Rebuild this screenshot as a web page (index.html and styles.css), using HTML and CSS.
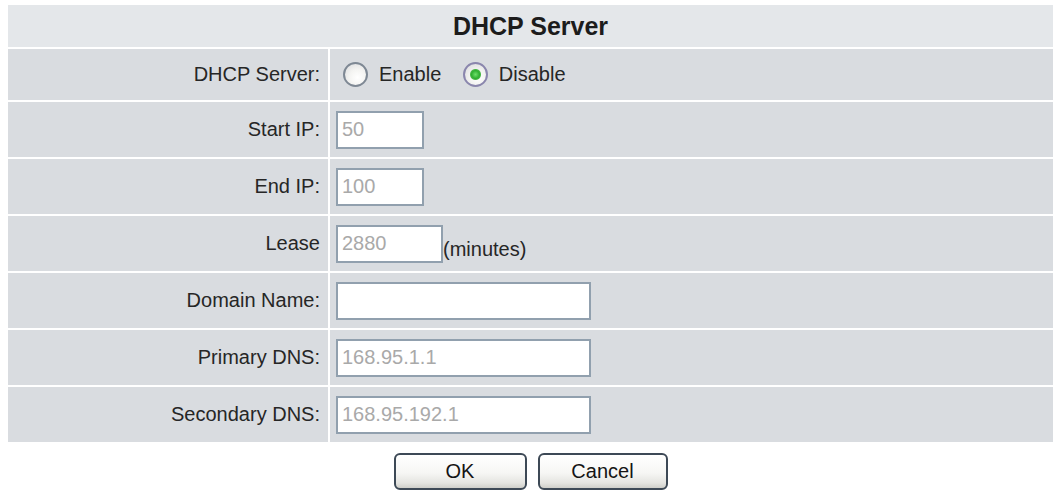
FILE: index.html
```html
<!DOCTYPE html>
<html>
<head>
<meta charset="utf-8">
<title>DHCP Server</title>
<link rel="stylesheet" href="styles.css">
</head>
<body>
<form class="panel">
  <table class="settings">
    <tr>
      <th class="title" colspan="2">DHCP Server</th>
    </tr>
    <tr class="short">
      <td class="label">DHCP Server:</td>
      <td class="field">
        <label class="choice"><input type="radio" name="dhcp" class="radio first">Enable</label>
        <label class="choice"><input type="radio" name="dhcp" class="radio" checked>Disable</label>
      </td>
    </tr>
    <tr>
      <td class="label">Start IP:</td>
      <td class="field"><input class="text small" type="text" value="50" disabled></td>
    </tr>
    <tr>
      <td class="label">End IP:</td>
      <td class="field"><input class="text small" type="text" value="100" disabled></td>
    </tr>
    <tr>
      <td class="label">Lease</td>
      <td class="field"><input class="text medium" type="text" value="2880" disabled><span class="unit">(minutes)</span></td>
    </tr>
    <tr>
      <td class="label">Domain Name:</td>
      <td class="field"><input class="text wide" type="text" value=""></td>
    </tr>
    <tr>
      <td class="label">Primary DNS:</td>
      <td class="field"><input class="text wide" type="text" value="168.95.1.1" disabled></td>
    </tr>
    <tr>
      <td class="label">Secondary DNS:</td>
      <td class="field"><input class="text wide" type="text" value="168.95.192.1" disabled></td>
    </tr>
  </table>
  <div class="actions">
    <button type="button" class="btn">OK</button>
    <button type="button" class="btn">Cancel</button>
  </div>
</form>
</body>
</html>
```
FILE: styles.css
```css
html, body {
  margin: 0;
  padding: 0;
  background: #ffffff;
}

body {
  font-family: "Liberation Sans", Arial, sans-serif;
  font-size: 20px;
  color: #262626;
}

.panel {
  margin: 0;
  padding: 3px 2px 0 6px;
}

.settings {
  width: 1049px;
  border-collapse: separate;
  border-spacing: 2px;
}

.settings th,
.settings td {
  padding: 0;
  height: 55px;
}

.title {
  height: 42px !important;
  background: #e4e7ea;
  font-size: 25px;
  font-weight: bold;
  color: #1c1c1c;
  text-align: center;
  vertical-align: middle;
}

.short td {
  height: 51px;
}

.label {
  width: 312px;
  padding-right: 8px !important;
  background: #d9dce0;
  text-align: right;
  vertical-align: middle;
  white-space: nowrap;
}

.field {
  padding-left: 6px !important;
  background: #d9dce0;
  vertical-align: middle;
  white-space: nowrap;
}

/* radio group */
.choice {
  display: inline-flex;
  align-items: center;
  vertical-align: middle;
  margin-right: 16px;
}

.radio {
  appearance: none;
  -webkit-appearance: none;
  box-sizing: border-box;
  width: 25px;
  height: 25px;
  margin: 0 11px 0 0;
  border-radius: 50%;
  border: 2px solid #7e8894;
  background: radial-gradient(circle at 60% 65%, #ffffff 0, #f4f4f2 45%, #d8d9dc 100%);
}

.radio.first {
  margin-left: 7px;
}

.radio:checked {
  border-color: #8a86ad;
  background:
    radial-gradient(circle at 50% 50%, #6ee06a 0, #2fae30 4px, #49b846 5px, rgba(255,255,255,0) 6px),
    radial-gradient(circle at 60% 65%, #ffffff 0, #f2f2f0 45%, #d6d7da 100%);
}

/* text inputs */
.text {
  box-sizing: border-box;
  height: 38px;
  margin: 0;
  padding: 0 4px;
  border: 2px solid #91a0ae;
  border-radius: 0;
  background: #ffffff;
  font-family: "Liberation Sans", Arial, sans-serif;
  font-size: 20px;
  color: #262626;
  vertical-align: middle;
}

.text:disabled {
  background: #ffffff;
  color: #a9a9a9;
  -webkit-text-fill-color: #a9a9a9;
  opacity: 1;
}

.small {
  width: 88px;
}

.medium {
  width: 107px;
}

.wide {
  width: 255px;
}

.unit {
  display: inline-block;
  vertical-align: middle;
  margin-top: 12px;
}

/* buttons */
.actions {
  display: flex;
  justify-content: center;
  gap: 11px;
  margin-top: 9px;
}

.btn {
  box-sizing: border-box;
  width: 133px;
  height: 37px;
  padding: 0;
  border: 2px solid #3d4956;
  border-radius: 6px;
  background: linear-gradient(#ffffff 0%, #f6f6f4 55%, #e4e4e0 85%, #cfcfca 100%);
  font-family: "Liberation Sans", Arial, sans-serif;
  font-size: 20px;
  color: #141414;
}

.btn + .btn {
  width: 130px;
}
```
